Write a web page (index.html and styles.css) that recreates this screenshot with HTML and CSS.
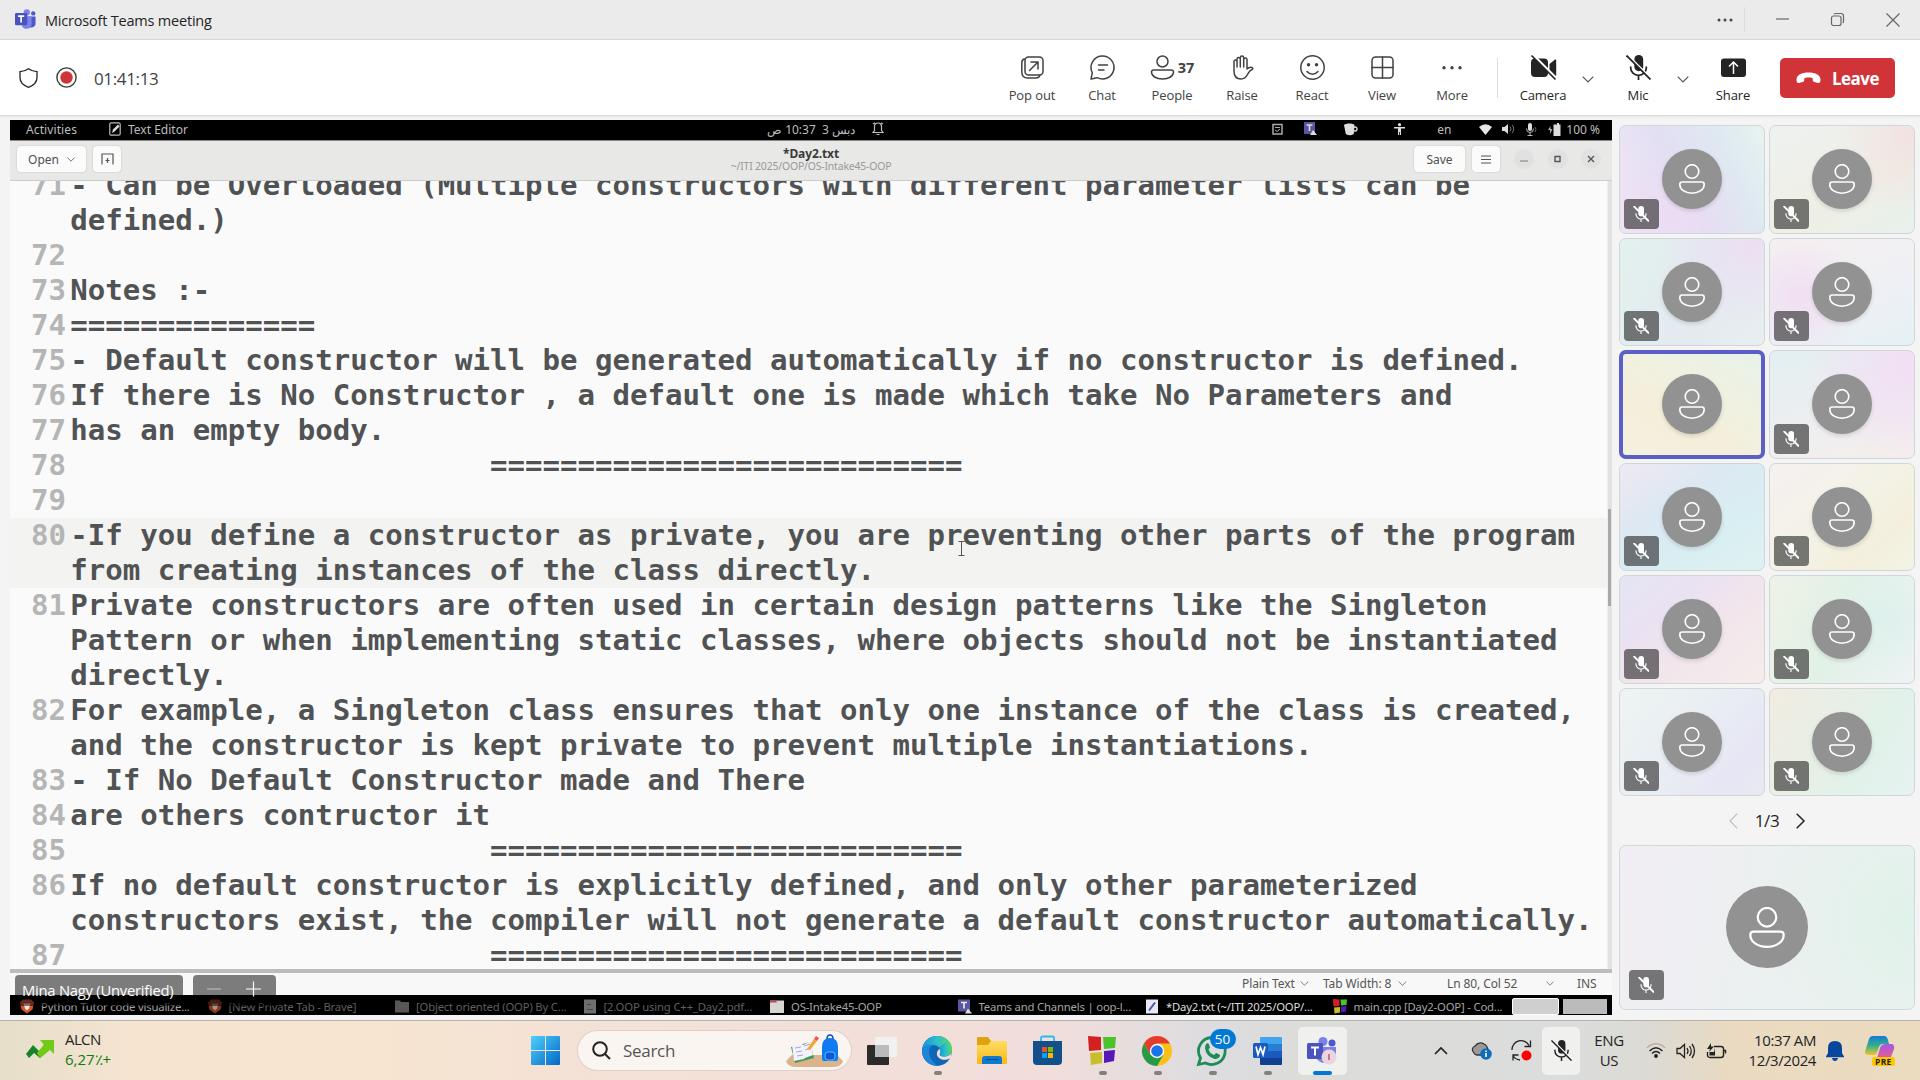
FILE: index.html
```html
<!DOCTYPE html>
<html lang="en">
<head>
<meta charset="utf-8">
<title>Microsoft Teams meeting</title>
<link rel="stylesheet" href="styles.css">
</head>
<body>
<svg class="defs" aria-hidden="true">
  <symbol id="person" viewBox="0 0 26 30"><g fill="none" stroke="currentColor" stroke-width="1.6"><circle cx="13" cy="7.5" r="6.8"/><path d="M3.2 18h19.6c1.4 0 2.4 1 2.4 2.4 0 5-5.2 8.8-12.2 8.8S.8 25.4.8 20.400C.8 19 1.800 18 3.200 18z"/></g></symbol>
  <symbol id="micoff" viewBox="0 0 24 24"><rect x="8" y="0" width="8.500" height="15.500" rx="4.200" fill="currentColor"/><path d="M4.500 11v1.500a7.500 7 0 0 0 15 0V11M12 19.500V24" fill="none" stroke="currentColor" stroke-width="1.700"/><path class="cut" d="M1.500 0L24.500 23" stroke-width="2"/><path d="M.5.500L23.500 23.500" stroke="currentColor" stroke-width="1.700"/></symbol>
  <symbol id="chev" viewBox="0 0 12 7"><path d="M.7.700L6 6 11.300.700" fill="none" stroke="currentColor" stroke-width="1.200"/></symbol>
  <symbol id="brave" viewBox="0 0 14 14"><path d="M3 0h8l3 3-1.500 7L7 14 1.500 10 0 3z" fill="#d9532c"/><path d="M3.500 4h7L9 9l-2 2-2-2z" fill="#f5e6dd"/></symbol>
  <symbol id="teams" viewBox="0 0 24 24"><circle cx="13.500" cy="3.800" r="3.600" fill="#7b83eb"/><circle cx="20.800" cy="5" r="2.500" fill="#5059c9"/><path d="M14 8.500h9.500v7.500a4.500 4.500 0 0 1-9.500 1z" fill="#5059c9"/><path d="M8 8.500h11v9a5.700 5.700 0 0 1-11 1.500z" fill="#7b83eb"/><rect y="4.500" width="14" height="14" rx="1.500" fill="#4b53bc"/><path d="M3.500 8.200h7M7 8.200v7.300" stroke="#fff" stroke-width="1.900"/></symbol>
  <symbol id="blocks" viewBox="0 0 28 30"><path d="M0 0l13 1v13L1 15z" fill="#d42020"/><path d="M15 1h13l-1 11-11 1z" fill="#4cc22c"/><path d="M2 17l12-1v11L3 29z" fill="#c6bf2b"/><path d="M16 15l11-1-1 11-10 2z" fill="#5418b8"/></symbol>
</svg>

<header class="titlebar">
  <svg class="app-logo" width="21" height="21"><use href="#teams"/></svg>
  <span class="app-title">Microsoft Teams meeting</span>
  <div class="window-controls">
    <svg class="dots" width="16" height="4" viewBox="0 0 16 4" fill="#444"><circle cx="2" cy="2" r="1.500"/><circle cx="8" cy="2" r="1.500"/><circle cx="14" cy="2" r="1.500"/></svg>
    <span class="sep"></span>
    <span class="wc"><svg width="13" height="13" viewBox="0 0 13 13"><path d="M0 6h13"/></svg></span>
    <span class="wc"><svg width="13" height="13" viewBox="0 0 13 13"><rect x=".5" y="3" width="9.500" height="9.500" rx="2"/><path d="M3 1.200C3.500.7 4 .5 5 .5h5a2.500 2.500 0 0 1 2.500 2.500v5c0 1-.2 1.500-.7 2"/></svg></span>
    <span class="wc"><svg width="14" height="14" viewBox="0 0 14 14"><path d="M.5.500l13 13M13.500.500l-13 13"/></svg></span>
  </div>
</header>

<nav class="toolbar">
  <div class="call-info">
    <svg width="19" height="20" viewBox="0 0 19 20" fill="none" stroke="#242424" stroke-width="1.300"><path d="M9.500.8c2.500 1.900 5 2.700 8.500 2.800V9.500c0 5-3.500 8-8.500 9.800C4.500 17.500 1 14.500 1 9.500V3.600C4.500 3.500 7 2.700 9.500.8z"/></svg>
    <svg width="21" height="21" viewBox="0 0 21 21"><circle cx="10.500" cy="10.500" r="9.600" fill="#fff" stroke="#3a3a3a" stroke-width="1.400"/><circle cx="10.500" cy="10.500" r="6.200" fill="#d13438"/></svg>
    <span class="timer">01:41:13</span>
  </div>
  <div class="tool"><svg class="line" viewBox="0 0 25 25"><rect x="5" y="2" width="18" height="18" rx="3.500"/><path d="M4.500 4C2.800 4.500 1.800 5.500 1.800 7.500v9.500c0 4 2 6 6 6h8c2 0 3.500-.8 4-2.500M9.500 15.500l8.500-8.500M11 7h7v7"/></svg><span>Pop out</span></div>
  <div class="tool"><svg class="line" viewBox="0 0 25 25"><path d="M12.500 1a11.500 11.500 0 1 1-5.300 21.700L1 24l1.300-6.200A11.500 11.500 0 0 1 12.500 1zM8.500 10h9M8.500 15h5.500"/></svg><span>Chat</span></div>
  <div class="tool"><div class="people"><svg class="line" viewBox="0 0 25 25"><circle cx="12.500" cy="6.500" r="5.500"/><path d="M4 15h17c1.500 0 2.500 1 2.500 2 0 4-4.500 7-11 7s-11-3-11-7c0-1 1-2 2.500-2z"/></svg><b>37</b></div><span>People</span></div>
  <div class="tool"><svg class="line" viewBox="0 0 25 25"><path d="M4 13V6.500c0-2 3-2 3 0V12M7 12V4c0-2 3.300-2 3.300 0v8M10.300 11V2.500c0-2 3.400-2 3.400 0V11M13.700 12V4.500c0-2 3.300-2 3.300 0V14c1.500-1.500 3-2.200 5-1.500 1 .4 1 1.500 0 2-2.500 1-3 2.500-4.500 5-1.500 3-3.500 4.500-6.500 4.500-5 0-7-3.500-7-8V12"/></svg><span>Raise</span></div>
  <div class="tool"><svg class="line" viewBox="0 0 25 25"><circle cx="12.500" cy="12.500" r="11.700"/><path d="M7 16.500c3 3.500 8 3.500 11 0"/><circle cx="8.500" cy="9.800" r="1" fill="#424242"/><circle cx="16.500" cy="9.800" r="1" fill="#424242"/></svg><span>React</span></div>
  <div class="tool"><svg class="line" viewBox="0 0 25 25"><rect x="2" y="2" width="21" height="21" rx="3.500"/><path d="M12.500 2v21M2 12.500h21"/></svg><span>View</span></div>
  <div class="tool"><svg viewBox="0 0 25 25" fill="#424242"><circle cx="4" cy="12.700" r="1.700"/><circle cx="12" cy="12.700" r="1.700"/><circle cx="20" cy="12.700" r="1.700"/></svg><span>More</span></div>
  <span class="tool-sep"></span>
  <div class="tool dark"><svg viewBox="0 0 25 25"><rect y="3.500" width="17" height="18.500" rx="4" fill="#242424"/><path d="M18.500 9L24 4.500q1.200-.5 1.200 1v14.500q0 1.500-1.200 1L18.500 17z" fill="#242424"/><path d="M1.500-.5L26 24" stroke="#fff" stroke-width="2.500"/><path d="M.5.500L24.500 24.500" stroke="#242424" stroke-width="1.700"/></svg><span>Camera</span></div>
  <svg class="chev"><use href="#chev"/></svg>
  <div class="tool dark mic"><svg viewBox="0 0 25 25"><use href="#micoff"/></svg><span>Mic</span></div>
  <svg class="chev"><use href="#chev"/></svg>
  <div class="tool dark share"><svg viewBox="0 0 25 25"><rect y="3.500" width="25" height="18.500" rx="3" fill="#242424"/><path d="M12.500 19V7.500M8 11.500l4.500-4.500 4.500 4.500" fill="none" stroke="#fff" stroke-width="1.500"/></svg><span>Share</span></div>
  <button class="leave"><svg width="25" height="12" viewBox="0 0 25 12"><path d="M12.500.5C19 .5 24.500 3 24.500 7.500c0 3-1 3.700-2.500 3.400l-3.500-.8c-1.300-.4-1.800-1-1.800-2.600V6.200c-2-.8-6.400-.8-8.400 0v1.300c0 1.600-.5 2.200-1.800 2.600L3 10.900C1.500 11.200.5 10.500.5 7.500.5 3 6 .5 12.500.5z" fill="#fff"/></svg><span>Leave</span></button>
</nav>

<main class="stage">
  <section class="shared">
    <div class="gnome-top">
      <span class="activities">Activities</span>
      <svg width="12" height="14" viewBox="0 0 12 14"><rect x=".8" y=".8" width="10.400" height="12.400" rx="1.500" fill="none" stroke="#bbb" stroke-width="1.200"/><path d="M3 11l1-3.500L9 2.500l1.500 2-5 5z" fill="#ddd"/></svg>
      <span class="appname">Text Editor</span>
      <span class="clock" dir="rtl" lang="ar">دبس 3&nbsp; 10:37 ص</span>
      <svg class="bell" width="12" height="14" viewBox="0 0 12 14" fill="none" stroke="#bbb" stroke-width="1.200"><path d="M1 10.500h10L9.500 8.500V4.500a3.500 3.500 0 0 0-7 0v4zM4.500 12.500h3M1 2L3 .7M11 2L9 .7"/></svg>
      <div class="indicators">
        <svg width="11" height="12" viewBox="0 0 11 12"><rect x="1" y="1.500" width="9" height="9.500" fill="none" stroke="#aaa" stroke-width="1.500"/><path d="M3 4.500h5M3 7l2 1.500L8 6" stroke="#aaa" fill="none"/></svg>
        <svg width="15" height="14" viewBox="0 0 15 14"><rect x="1" width="11" height="12" fill="#5a559f"/><path d="M3.500 3h6M6.500 3v6" stroke="#ddd" stroke-width="1.600"/><path d="M7 13l3-5 4 5z" fill="#ddd"/></svg>
        <svg width="14" height="13" viewBox="0 0 14 13"><path d="M0 2c2-2 9-2 10.500 0L9.800 11q-4 2.500-8 0z" fill="#ddd"/><circle cx="11" cy="6" r="2" fill="none" stroke="#ddd" stroke-width="1.300"/></svg>
        <svg width="11" height="12" viewBox="0 0 11 12"><circle cx="5.500" cy="1.700" r="1.600" fill="#ddd"/><path d="M0 4h11v1.500H7V12H5.900V9h-.8v3H4V5.500H0z" fill="#ddd"/></svg>
        <span class="en">en</span>
        <svg width="13" height="11" viewBox="0 0 13 11"><path d="M0 3Q6.500-2.500 13 3L6.500 11z" fill="#e6e6e6"/></svg>
        <svg width="13" height="12" viewBox="0 0 13 12"><path d="M0 4h2.500L6 1v10L2.500 8H0z" fill="#ddd"/><path d="M8 3.500q2 2.500 0 5M10 2q3.500 4 0 8" stroke="#777" fill="none"/></svg>
        <svg width="13" height="13" viewBox="0 0 13 13"><rect x="3" width="4" height="8" rx="2" fill="#ddd"/><path d="M1.500 5.500q0 4 3.500 4t3.500-4M5 9.500V13M2.500 12.500h5" stroke="#bbb" fill="none"/><path d="M10 4q2 2.500 0 5" stroke="#666" fill="none"/></svg>
        <svg width="13" height="13" viewBox="0 0 13 13"><path d="M7.500 1.500H9V0h2v1.500h1.500V13H5.500V1.500z" fill="#ddd"/><path d="M2.500 3L0 7h2v4l2.500-5h-2z" fill="#aaa"/></svg>
        <span class="pct">100 %</span>
      </div>
    </div>

    <div class="gedit-head">
      <span class="gbtn open">Open <svg width="8" height="5"><use href="#chev"/></svg></span>
      <span class="gbtn newtab"><svg width="13" height="12" viewBox="0 0 13 12" fill="none" stroke="#555" stroke-width="1.200"><path d="M1 11.500V1h11v10.500M6.500 5v5M4.500 7.500h4"/></svg></span>
      <div class="doc-title"><b>*Day2.txt</b><span>~/ITI 2025/OOP/OS-Intake45-OOP</span></div>
      <span class="gbtn save">Save</span>
      <span class="gbtn menu"><svg width="10" height="9" viewBox="0 0 10 9"><path d="M0 1h10M0 4.500h10M0 8h10" stroke="#555" stroke-width="1.200"/></svg></span>
      <span class="circ faint"><svg width="8" height="8"><path d="M0 6h8"/></svg></span>
      <span class="circ"><svg width="8" height="8"><path d="M1 1.500h5v5H1z"/></svg></span>
      <span class="circ"><svg width="8" height="8"><path d="M1 1l6 6M7 1L1 7"/></svg></span>
    </div>

    <div class="editor">
      <div class="lines">
<div class="ln"><i>71</i><pre>- Can be Overloaded (Multiple constructors with different parameter lists can be
defined.)</pre></div>
<div class="ln"><i>72</i><pre></pre></div>
<div class="ln"><i>73</i><pre>Notes :-</pre></div>
<div class="ln"><i>74</i><pre>==============</pre></div>
<div class="ln"><i>75</i><pre>- Default constructor will be generated automatically if no constructor is defined.</pre></div>
<div class="ln"><i>76</i><pre>If there is No Constructor , a default one is made which take No Parameters and</pre></div>
<div class="ln"><i>77</i><pre>has an empty body.</pre></div>
<div class="ln"><i>78</i><pre>                        ===========================</pre></div>
<div class="ln"><i>79</i><pre></pre></div>
<div class="ln current"><i>80</i><pre>-If you define a constructor as private, you are preventing other parts of the program
from creating instances of the class directly.</pre></div>
<div class="ln"><i>81</i><pre>Private constructors are often used in certain design patterns like the Singleton
Pattern or when implementing static classes, where objects should not be instantiated
directly.</pre></div>
<div class="ln"><i>82</i><pre>For example, a Singleton class ensures that only one instance of the class is created,
and the constructor is kept private to prevent multiple instantiations.</pre></div>
<div class="ln"><i>83</i><pre>- If No Default Constructor made and There</pre></div>
<div class="ln"><i>84</i><pre>are others contructor it</pre></div>
<div class="ln"><i>85</i><pre>                        ===========================</pre></div>
<div class="ln"><i>86</i><pre>If no default constructor is explicitly defined, and only other parameterized
constructors exist, the compiler will not generate a default constructor automatically.</pre></div>
<div class="ln"><i>87</i><pre>                        ===========================</pre></div>
      </div>
      <div class="scrollbar"><span></span></div>
      <svg class="ibeam" width="7" height="15" viewBox="0 0 7 15"><path d="M.5.500h6M3.500.500v14M.5 14.500h6" stroke="#555" fill="none"/></svg>
    </div>

    <div class="statusbar">
      <span class="plain">Plain Text</span><svg width="9" height="5"><use href="#chev"/></svg>
      <span class="tabw">Tab Width: 8</span><svg width="9" height="5"><use href="#chev"/></svg>
      <span class="lncol">Ln 80, Col 52</span><svg class="far" width="8" height="5"><use href="#chev"/></svg>
      <span class="ins">INS</span>
    </div>

    <div class="gnome-tasks">
      <div class="gt on"><svg><use href="#brave"/></svg><span>Python Tutor code visualize...</span></div>
      <div class="gt dim"><svg><use href="#brave"/></svg><span>[New Private Tab - Brave]</span></div>
      <div class="gt dim"><svg viewBox="0 0 14 14"><path d="M0 1h5l1 1.500h8V13H0z" fill="#8a8586"/></svg><span>[Object oriented (OOP) By C...</span></div>
      <div class="gt dim"><svg viewBox="0 0 14 14"><path d="M1 0h12v14H1z" fill="#aaa"/><path d="M4 5h4M4 10h6" stroke="#666"/></svg><span>[2.OOP using C++_Day2.pdf...</span></div>
      <div class="gt on"><svg viewBox="0 0 14 14"><path d="M0 1h14v12.500H0z" fill="#d8d6d4"/><path d="M0 1h6l1 2H0z" fill="#c7405c"/></svg><span>OS-Intake45-OOP</span></div>
      <div class="gt on"><svg viewBox="0 0 14 14"><rect width="12" height="12" fill="#5a559f"/><path d="M3 3h6M6 3v6" stroke="#eee" stroke-width="1.600"/><path d="M7 14l3-5 4 5z" fill="#ddd"/></svg><span>Teams and Channels | oop-l...</span></div>
      <div class="gt hot"><svg viewBox="0 0 14 14"><path d="M1 0h12v14H1z" fill="#e8e8f4"/><path d="M4 11L10 3" stroke="#4656a8" stroke-width="2"/></svg><span>*Day2.txt (~/ITI 2025/OOP/...</span></div>
      <div class="gt on"><svg><use href="#blocks"/></svg><span>main.cpp [Day2-OOP] - Cod...</span></div>
      <span class="ws first"></span><span class="ws"></span>
    </div>

    <div class="presenter"><span class="name">Mina Nagy (Unverified)</span><span class="zoomctl"><svg width="64" height="20" viewBox="0 0 64 20"><path d="M4 10h14" stroke="#aaa" stroke-width="1.500"/><path d="M43 10h15M50.500 2.500v15" stroke="#fff" stroke-width="1.200"/></svg></span></div>
  </section>

  <aside class="roster">
    <div class="grid">
      <div class="tile t1"><span class="avatar"><svg><use href="#person"/></svg></span><span class="muted"><svg><use href="#micoff"/></svg></span></div>
      <div class="tile t2"><span class="avatar"><svg><use href="#person"/></svg></span><span class="muted"><svg><use href="#micoff"/></svg></span></div>
      <div class="tile t3"><span class="avatar"><svg><use href="#person"/></svg></span><span class="muted"><svg><use href="#micoff"/></svg></span></div>
      <div class="tile t4"><span class="avatar"><svg><use href="#person"/></svg></span><span class="muted"><svg><use href="#micoff"/></svg></span></div>
      <div class="tile t5 speaking"><span class="avatar"><svg><use href="#person"/></svg></span></div>
      <div class="tile t6"><span class="avatar"><svg><use href="#person"/></svg></span><span class="muted"><svg><use href="#micoff"/></svg></span></div>
      <div class="tile t7"><span class="avatar"><svg><use href="#person"/></svg></span><span class="muted"><svg><use href="#micoff"/></svg></span></div>
      <div class="tile t8"><span class="avatar"><svg><use href="#person"/></svg></span><span class="muted"><svg><use href="#micoff"/></svg></span></div>
      <div class="tile t9"><span class="avatar"><svg><use href="#person"/></svg></span><span class="muted"><svg><use href="#micoff"/></svg></span></div>
      <div class="tile t10"><span class="avatar"><svg><use href="#person"/></svg></span><span class="muted"><svg><use href="#micoff"/></svg></span></div>
      <div class="tile t11"><span class="avatar"><svg><use href="#person"/></svg></span><span class="muted"><svg><use href="#micoff"/></svg></span></div>
      <div class="tile t12"><span class="avatar"><svg><use href="#person"/></svg></span><span class="muted"><svg><use href="#micoff"/></svg></span></div>
    </div>
    <div class="pager">
      <svg width="9" height="16" viewBox="0 0 9 16"><path d="M8.300.700L1 8l7.300 7.300" fill="none" stroke="#bdbdbd" stroke-width="1.200"/></svg>
      <span>1/3</span>
      <svg width="9" height="16" viewBox="0 0 9 16"><path d="M.7.700L8 8 .7 15.300" fill="none" stroke="#242424" stroke-width="1.500"/></svg>
    </div>
    <div class="tile self"><span class="avatar"><svg><use href="#person"/></svg></span><span class="muted"><svg><use href="#micoff"/></svg></span></div>
  </aside>
</main>

<footer class="taskbar">
  <div class="widget">
    <svg width="28" height="18" viewBox="0 0 28 18"><path d="M0 14L7 5l6 6 5-6 5 5-9 8-6-5-5 5z" fill="#16832b"/><path d="M14 0h14v14l-4-4-10 8-3-5 7-8z" fill="#72c916"/></svg>
    <div><span>ALCN</span><span class="up">6,27٪+</span></div>
  </div>
  <div class="tb"><svg width="29" height="29" viewBox="0 0 29 29"><defs><linearGradient id="win" x2="1" y2="1"><stop stop-color="#50d0fa"/><stop offset="1" stop-color="#0068c8"/></linearGradient></defs><path d="M1 0h13v14H0V1q0-1 1-1zM15 0h13q1 0 1 1v13H15zM0 15h14v14H1q-1 0-1-1zM15 15h14v13q0 1-1 1H15z" fill="url(#win)"/></svg></div>
  <div class="search">
    <svg width="19" height="19" viewBox="0 0 19 19" fill="none" stroke="#222" stroke-width="2"><circle cx="8" cy="8" r="6.800"/><path d="M13 13l5 5"/></svg>
    <span>Search</span>
    <svg class="art" width="58" height="32" viewBox="0 0 58 32"><path d="M0 26l6-6h45l6 6q-2 6-10 6H10Q2 32 0 26z" fill="#dbb48b"/><path d="M5 12l19-5 4 16-19 5z" fill="#3f9a58"/><path d="M6 10l9-2 2 2 8-4 2 14-8 3-1 1-10 2z" fill="#f4f2fb"/><path d="M9 13l6-1M10 17l6-1M11 21l6-1M18 11l6-2M19 15l6-2" stroke="#a9a6d0"/><path d="M21 14l7-10 3 2-7 9z" fill="#f5a63a"/><path d="M28 4l2-3 3 2-2 3z" fill="#ef5350"/><path d="M36 12q0-9 8-9t8 9v12q0 2-2 2H38q-2 0-2-2z" fill="#0f7af2"/><path d="M41 4q0-4 3-4t3 4" fill="none" stroke="#0a4fbe" stroke-width="1.500"/><rect x="39" y="17" width="10" height="8" rx="3" fill="#1556d8" stroke="#48c3ff"/></svg>
  </div>
  <div class="apps">
    <div class="tb"><svg width="30" height="28" viewBox="0 0 30 28"><rect y="8" width="22" height="20" rx="1" fill="#2b2b29"/><rect x="8" width="22" height="20" rx="1" fill="#f2f2f2" opacity=".93"/><path d="M8 8h14v12H8z" fill="#bbb"/></svg></div>
    <div class="tb run"><svg width="30" height="30" viewBox="0 0 30 30"><defs><linearGradient id="edge" x1="0" x2="1"><stop stop-color="#1b8fdc"/><stop offset=".5" stop-color="#2bc0cf"/><stop offset="1" stop-color="#5fd84c"/></linearGradient></defs><circle cx="15" cy="15" r="15" fill="#0f66b8"/><path d="M0 14C1 5 7 0 15 0c9 0 15 6 15 13 0 5-4 7.500-8 7.500-3 0-5-1-4-3C20 14 17 9 11 9 6 9 2 11 0 14z" fill="url(#edge)"/><path d="M0 15c1-4 6-7 11-6-4 2-5 7-3 12 2 4 5 7 8 9C7 30 0 23 0 15z" fill="#1c87d8"/><path d="M30 14.500C29.500 19 26 20.500 22 20.500c-3 0-5-1-4-3 .8-1.500.5-3-.5-4.500-3 2-3.500 6-1 8.500 3 3 8.500 3 12.500.500z" fill="#f0dedc"/><path d="M30 13c0 5-4 7.500-8 7.500-3 0-5-1-4-3 1-2 .5-4-1-6L24 6z" fill="url(#edge)"/></svg></div>
    <div class="tb"><svg width="30" height="27" viewBox="0 0 30 27"><defs><linearGradient id="fold" y2="1" x2="0"><stop stop-color="#ffdc64"/><stop offset="1" stop-color="#fbb812"/></linearGradient></defs><path d="M0 1q0-1 1-1h10l3 4h15v8H0z" fill="#e0a30e"/><path d="M0 8h11l3-4h15q1 0 1 1v21q0 1-1 1H1q-1 0-1-1z" fill="url(#fold)"/><path d="M5 27v-5q0-3 3-3h14q3 0 3 3v5z" fill="#0f79cd"/><path d="M8.500 22.500h13" stroke="#0a4d8c"/></svg></div>
    <div class="tb"><svg width="29" height="29" viewBox="0 0 29 29"><path d="M8 5V2q0-1.500 1.500-1.500h10Q21 .5 21 2v3" fill="none" stroke="#28b9f2" stroke-width="1.800"/><path d="M0 5h29v20q0 4-4 4H4q-4 0-4-4z" fill="#134f8b"/><path d="M9 11h5v5H9z" fill="#f25022"/><path d="M15 11h5v5h-5z" fill="#7fba00"/><path d="M9 17h5v5H9z" fill="#00a4ef"/><path d="M15 17h5v5h-5z" fill="#ffb900"/></svg></div>
    <div class="tb run"><svg width="28" height="30"><use href="#blocks"/></svg></div>
    <div class="tb run"><svg width="30" height="30" viewBox="0 0 30 30"><circle cx="15" cy="15" r="15" fill="#fbc116"/><path d="M2 7.500A15 15 0 0 1 28 7.500H15L8.500 18.750z" fill="#e33b2e"/><path d="M2 7.500A15 15 0 0 0 15 30l6.500-11.250H8.500z" fill="#269a48"/><circle cx="15" cy="15" r="7.200" fill="#fff"/><circle cx="15" cy="15" r="5.800" fill="#1a73e8"/></svg></div>
    <div class="tb run"><svg width="30" height="30" viewBox="0 0 30 30"><path d="M15 1.500A13.500 13.500 0 1 1 8.500 27L1.500 28.500 3.500 22A13.500 13.500 0 0 1 15 1.500z" fill="none" stroke="#1d8c55" stroke-width="2.800"/><path d="M9.500 7.500q2-1 2.500 1l1 3-1.500 2q1.500 4 5.500 5.500l2-2 3.500 1.500q1 1 0 2.500-2 2.500-5 2Q9 20.500 8 12q0-3 1.500-4.500z" fill="#1d8c55"/></svg><b class="count">50</b></div>
    <div class="tb run"><svg width="29" height="28" viewBox="0 0 29 28"><path d="M7 1q0-1 1-1h20q1 0 1 1v6H7z" fill="#41a5ee"/><path d="M7 7h22v7H7z" fill="#2b7cd3"/><path d="M7 14h22v7H7z" fill="#185abd"/><path d="M7 21h22v6q0 1-1 1H8q-1 0-1-1z" fill="#103f91"/><rect y="6" width="15" height="15" rx="1.500" fill="#185abd"/><path d="M3 9.500l2 8 2.500-7 2.500 7 2-8" stroke="#fff" stroke-width="1.700" fill="none"/></svg></div>
    <div class="tb active"><svg width="30" height="28" viewBox="0 0 30 28"><circle cx="16" cy="4.500" r="4.500" fill="#7b83eb"/><circle cx="25" cy="6" r="3.500" fill="#5059c9"/><path d="M9 10h20v8q-2 8-10 8T9 20z" fill="#7b83eb"/><rect y="6" width="16" height="16" rx="1.500" fill="#4b53bc"/><path d="M4 10.500h8M8 10.500v8" stroke="#fff" stroke-width="2"/><circle cx="22" cy="20" r="7.500" fill="#ecd4de"/><path d="M22 17v6" stroke="#b0567f" stroke-width="1.500"/></svg></div>
  </div>
  <div class="tray">
    <div class="ti"><svg width="14" height="8" viewBox="0 0 14 8"><path d="M1 7l6-6 6 6" fill="none" stroke="#222" stroke-width="1.700"/></svg></div>
    <div class="ti"><svg width="21" height="18" viewBox="0 0 21 18"><path d="M3 11a4 4 0 0 1 1-7Q8-1 13 2q3 1 4 6l-3 5H6q-2 0-3-2z" fill="#9a9a9a" stroke="#333" stroke-width="1.300"/><circle cx="15" cy="12" r="5.800" fill="#0f6cbd"/><path d="M15 11v4M15 8.500v1.500" stroke="#fff" stroke-width="1.600"/></svg></div>
    <div class="ti"><svg width="21" height="21" viewBox="0 0 21 21" fill="none" stroke="#222" stroke-width="1.300"><path d="M1 10A9 9 0 0 1 18 5.500M19.500.500v6h-6M7.500 15H2v5.500M2 15.500q2 4 7 4.500"/><circle cx="15.500" cy="15.500" r="5" fill="#f00" stroke="none"/></svg></div>
    <div class="ti micbox"><svg width="21" height="21"><use href="#micoff"/></svg></div>
    <div class="lang"><span>ENG</span><span>US</span></div>
    <div class="ti net"><svg width="20" height="15" viewBox="0 0 20 15" fill="none" stroke="#222" stroke-width="1.400"><path d="M.7 5Q10-3.500 19.300 5" stroke="#bbb09c"/><path d="M3.500 8Q10 1.500 16.500 8M6 10.500q4-4 8 0"/><circle cx="10" cy="13" r="1.200" fill="#222"/></svg></div>
    <div class="ti net"><svg width="20" height="16" viewBox="0 0 20 16" fill="none" stroke="#222" stroke-width="1.300"><path d="M1 5.500h3L8.500 1.500v13L4 10.500H1zM11 5q2 3 0 6M13.500 3q3.500 5 0 10M16 1q5 7 0 14"/></svg></div>
    <div class="ti net"><svg width="20" height="16" viewBox="0 0 20 16" fill="none" stroke="#222" stroke-width="1.400"><path d="M8 3.500h7q2.500 0 2.500 2.500v6q0 2.500-2.500 2.500H4Q1.500 14.500 1.500 12V9M18 7.500h1.500v3"/><path d="M3.500 9H8l1-4v7.500H3.500zM5 0L1 6h3L3 9l5-5.500H5z" fill="#222" stroke="none"/></svg></div>
    <div class="clock2"><span>10:37 AM</span><span>12/3/2024</span></div>
    <div class="ti bell2"><svg width="18" height="20" viewBox="0 0 18 20"><path d="M9 0q7 0 7 7v5l2 3.500v.8H0v-.8L2 12V7q0-7 7-7zM6 17h6q-.5 3-3 3t-3-3z" fill="#06469c"/></svg></div>
    <div class="ti copilot"><svg width="30" height="29" viewBox="0 0 30 29"><defs><linearGradient id="cp1" x2="0" y2="1"><stop stop-color="#1a78d8"/><stop offset=".5" stop-color="#30b08c"/><stop offset="1" stop-color="#f4c32c"/></linearGradient><linearGradient id="cp2" x2="0" y2="1"><stop stop-color="#a558e8"/><stop offset="1" stop-color="#f0607a"/></linearGradient></defs><path d="M8 0h11q3 0 4 4l1 4h-6q-3 0-4 3l-2 6q-1 2-3 2H3q-4 0-2.500-5L4 3q1-3 4-3z" fill="url(#cp1)"/><path d="M21 8h5q4 0 3 5l-3 8q-1 4-5 4H8q3 0 4-3l3-10q1-4 6-4z" fill="url(#cp2)"/></svg><b>PRE</b></div>
  </div>
</footer>
</body>
</html>
```
FILE: styles.css
```css
* { box-sizing: border-box; }
body { margin: 0; width: 1920px; height: 1080px; overflow: hidden; display: flex; flex-direction: column; background: #f4f4f4; color: #242424; font-family: "Open Sans", "Noto Sans", sans-serif; }
.defs { position: absolute; width: 0; height: 0; }
svg { display: block; flex: none; overflow: visible; }
.cut { stroke: #fff; }

.titlebar { height: 40px; flex: none; display: flex; align-items: center; padding-left: 15px; background: #ebebeb; border-bottom: 1px solid #d6d6d6; }
.app-title { margin-left: 9px; padding-top: 2px; font-size: 14.5px; letter-spacing: -.2px; }
.window-controls { display: flex; align-items: center; margin-left: auto; }
.window-controls .sep { width: 1px; height: 25px; margin-left: 11px; margin-right: 10px; background: #dcdcdc; }
.wc { width: 55px; display: flex; justify-content: center; }
.wc svg { fill: none; stroke: #666; stroke-width: 1.2; }

.toolbar { height: 76px; flex: none; display: flex; align-items: center; padding-right: 25px; background: #fff; border-bottom: 1px solid #dcdcdc; box-shadow: 0 1px 2px #0001; }
.call-info { display: flex; align-items: center; width: 997px; padding-left: 19px; gap: 18px; }
.timer { margin-left: -1px; padding-top: 2px; font-size: 17px; letter-spacing: -.35px; color: #424242; }
.tool { width: 70px; height: 48px; display: flex; flex-direction: column; align-items: center; gap: 6px; margin-top: 2px; font-size: 13px; line-height: 19px; color: #424242; letter-spacing: -.1px; white-space: nowrap; }
.tool svg { width: 25px; height: 25px; }
.tool.dark { color: #242424; }
.tool .line { fill: none; stroke: #424242; stroke-width: 1.5; stroke-linejoin: round; stroke-linecap: round; }
.people { display: flex; align-items: center; gap: 3px; height: 25px; font-size: 14.5px; letter-spacing: 0; }
.tool-sep { width: 1px; height: 40px; margin: 0 10px; background: #ddd; }
.chev { width: 12px; height: 7px; margin: 4px 4px 0; color: #555; }
.mic, .share { margin-left: 5px; }
.leave { display: flex; align-items: center; justify-content: center; gap: 11px; width: 115px; height: 40px; margin-left: 12px; padding: 0; border: 0; border-radius: 5px; background: #d13438; color: #fff; font: 700 17px "Open Sans", sans-serif; letter-spacing: -.5px; }
.leave span { padding-top: 1px; }

.stage { height: 904px; flex: none; display: flex; padding: 4px 5px 5px 10px; }
.shared { position: relative; width: 1602px; height: 895px; display: flex; flex-direction: column; background: #fafafa; font-family: "Noto Sans", sans-serif; }
.gnome-top { height: 20px; display: flex; align-items: center; padding: 0 12px 2px 16px; background: #000; color: #bdbdbd; font-size: 12px; }
.activities { width: 83px; letter-spacing: .1px; }
.appname { margin-left: 7px; width: 175px; }
.clock { width: 92px; margin-left: 464px; white-space: nowrap; text-align: left; }
.bell { margin-left: 13px; }
.indicators { display: flex; align-items: center; margin-left: auto; }
.indicators svg:nth-of-type(2) { margin-left: 20px; }
.indicators svg:nth-of-type(3) { margin-left: 26px; }
.indicators svg:nth-of-type(4) { margin-left: 36px; }
.en { margin-left: 32px; margin-right: 28px; }
.indicators svg:nth-of-type(n+6) { margin-left: 10px; }
.pct { margin-left: 5px; }

.gedit-head { height: 41px; display: flex; align-items: center; padding: 0 11px 3px 7px; border-top: 1px solid #888; border-bottom: 1px solid #ccc; background: #e8e8e7; font-size: 12px; color: #505050; }
.gbtn { height: 26px; display: flex; align-items: center; justify-content: center; border-radius: 4px; background: #fbfbfb; box-shadow: 0 0 2px #0003; }
.open { width: 69px; gap: 8px; }
.newtab { width: 28px; margin-left: 7px; }
.doc-title { width: 200px; margin-left: 590px; padding-top: 2px; display: flex; flex-direction: column; align-items: center; line-height: 13px; white-space: nowrap; letter-spacing: -.1px; }
.doc-title b { color: #3a3a3a; font-size: 12px; }
.doc-title span { color: #999; font-size: 10.4px; letter-spacing: -.15px; }
.save { width: 51px; margin-left: auto; }
.menu { width: 28px; margin: 0 14px 0 7px; }
.circ { width: 20px; height: 20px; margin-right: 13.5px; border-radius: 50%; display: flex; align-items: center; justify-content: center; background: #e1e1e1; }
.circ:last-child { margin-right: 0; }
.circ svg { fill: none; stroke: #555; stroke-width: 1.4; }
.circ.faint svg { stroke: #999; }

.editor { position: relative; height: 792px; display: flex; overflow: hidden; background: #fafafb; border-bottom: 4px solid #bcbcbc; }
.lines { width: 1597px; margin-top: -13.5px; flex: none; font: bold 29.07px/35px "DejaVu Sans Mono", monospace; color: #505253; }
.ln { display: flex; min-height: 35px; }
.ln i { width: 56px; flex: none; text-align: right; font-style: normal; color: #b5b5b5; }
.ln pre { margin: 0 0 0 4.2px; font: inherit; }
.current { background: #f3f3f1; }
.scrollbar { width: 5px; background: #e2e2e2; border-left: 1px solid #eee; }
.scrollbar span { display: block; width: 3px; height: 97px; margin-top: 328px; background: #a9a9a9; }
.ibeam { position: absolute; left: 948px; top: 360px; }

.statusbar { height: 22px; display: flex; align-items: center; padding-left: 1232px; padding-bottom: 1px; font-size: 12px; color: #555; background: #f8f8f8; white-space: nowrap; letter-spacing: -.1px; }
.statusbar svg { color: #666; }
.plain { width: 58px; }
.tabw { width: 75px; margin-left: 14px; }
.lncol { width: 72px; margin-left: 40px; }
.statusbar .far { margin-left: 27px; }
.ins { margin-left: 23px; }

.gnome-tasks { height: 20px; display: flex; align-items: center; padding-left: 10px; padding-top: 2px; background: #000; color: #a5a5a5; font-size: 11.3px; letter-spacing: -.18px; overflow: hidden; }
.gt { width: 187.5px; flex: none; display: flex; align-items: center; gap: 7px; white-space: nowrap; }
.gt svg { width: 14px; height: 15px; }
.dim { color: #5f5f5f; }
.dim svg { opacity: .65; }
.hot { color: #ddd; }
.ws { width: 44px; height: 15px; flex: none; background: #bbb; margin-left: 4px; }
.ws.first { width: 47px; height: 17px; margin-left: -8px; border: 1px solid #fff; border-radius: 2px; background: #cfcfcf; }

.presenter { position: absolute; left: 5px; top: 855px; height: 31px; display: flex; gap: 10px; font-family: "Open Sans", sans-serif; }
.presenter span { border-radius: 4px; background: #00000080; }
.presenter .name { width: 168px; padding-left: 7px; color: #fff; font-size: 14.8px; line-height: 31px; letter-spacing: -.25px; white-space: nowrap; }
.presenter .zoomctl { width: 83px; padding: 4px 10px; }

.roster { width: 296px; margin-left: 7px; display: flex; flex-direction: column; }
.grid { display: grid; grid-template-columns: 146px 146px; grid-template-rows: repeat(6, 1fr); gap: 4px; height: 671px; margin-top: 5px; }
.tile { position: relative; display: flex; align-items: center; justify-content: center; border: 1px solid #d0d7d9; border-radius: 7px; }
.avatar { width: 60px; height: 60px; border-radius: 50%; display: flex; align-items: center; justify-content: center; background: #929292; color: #fff; box-shadow: 0 2px 4px #0002; }
.avatar svg { width: 26px; height: 30px; }
.muted { position: absolute; left: 4px; bottom: 4px; width: 35px; height: 30px; padding-right: 1px; border-radius: 4px; background: rgba(28, 28, 28, .58); display: flex; align-items: center; justify-content: center; color: #fff; }
.muted svg { width: 16px; height: 16px; }
.speaking::after { content: ""; position: absolute; inset: -1px; border: 4px solid #5b5fc7; border-radius: 7px; }
.t1 { background: radial-gradient(circle at 35% 85%, #ecdcf3, transparent 55%), linear-gradient(65deg, #f3e6f6, #e2dff3 45%, #dfe9f1 75%, #e8f3f0); }
.t2 { background: radial-gradient(circle at 100% 10%, #f2e2e2, transparent 45%), linear-gradient(150deg, #eff1f1, #eeefe4 60%, #e7f1ed); }
.t3 { background: radial-gradient(circle at 90% 5%, #ecdff2, transparent 50%), linear-gradient(110deg, #e2f1ee, #e3eaf0 50%, #e8eef0); }
.t4 { background: radial-gradient(circle at 20% 55%, #f0dff2, transparent 50%), linear-gradient(160deg, #f6f0f0, #eef0f5 60%, #e4f1f3); }
.t5 { background: linear-gradient(30deg, #f6f0df, #f5eedb 35%, #f0f1e0 60%, #e8f2ea); }
.t6 { background: radial-gradient(circle at 95% 15%, #f2def4, transparent 60%), linear-gradient(165deg, #e3eff1, #eeeef0 60%, #f5efeb); }
.t7 { background: linear-gradient(145deg, #efe9f2, #dde8f2 35%, #d9eef2 65%, #def2f1); }
.t8 { background: linear-gradient(140deg, #f5f1f1, #f3f2e5 50%, #f4efdd 75%, #f2f3e6); }
.t9 { background: linear-gradient(140deg, #e5e5f5, #eae2f2 30%, #f2e6ec 60%, #f5ecea); }
.t10 { background: radial-gradient(circle at 80% 40%, #def1ec, transparent 45%), linear-gradient(110deg, #eef2e7, #e2f1e6 45%, #eef2f5); }
.t11 { background: linear-gradient(130deg, #eef3f2, #e9eef3 45%, #e6e6f4 80%, #eaeaf4); }
.t12 { background: linear-gradient(120deg, #f2ece2, #e5f0e6 50%, #e1f2e9 65%, #e6f2f2); }
.pager { height: 49px; display: flex; align-items: center; justify-content: center; gap: 17px; font-size: 17px; letter-spacing: -.4px; }
.self { height: 165px; padding-bottom: 1px; background: radial-gradient(circle at 100% 45%, #e0f2e9, transparent 50%), linear-gradient(100deg, #f2edf4, #ebf0f0 50%, #edf2f1); }
.self .avatar { width: 82px; height: 82px; box-shadow: none; }
.self .avatar svg { width: 36px; height: 41px; }
.self .muted { left: 9px; bottom: 9px; }

.taskbar { height: 60px; flex: none; display: flex; align-items: center; border-top: 1px solid #b5b1ad; background: linear-gradient(90deg, #e6dfc9 0, #f6e4d1 7%, #f7e5d0 18%, #f4e1d7 32%, #f1dedb 55%, #dddce0 63%, #dcdcd9 68%, #dbdddc 82%, #dcdad3 86%, #e9dac1 90%, #ebdcc0 100%); }
.widget { width: 518px; padding-left: 26px; padding-bottom: 3px; display: flex; align-items: center; gap: 11px; font-size: 15px; line-height: 20px; letter-spacing: -.6px; }
.widget div { display: flex; flex-direction: column; }
.widget .up { color: #0f7b0f; }
.tb { position: relative; width: 55px; height: 48px; display: flex; align-items: center; justify-content: center; }
.search { width: 273px; height: 39px; margin: 0 3.5px 0 5px; padding: 0 7px 0 14px; display: flex; align-items: center; border-radius: 20px; background: #fbf5f2; box-shadow: 0 0 0 1px #dfd0c8; }
.search span { margin-left: 12px; font-size: 17px; letter-spacing: -.3px; color: #555; }
.art { margin-left: auto; }
.apps { display: flex; }
.run::after, .active::after { content: ""; position: absolute; left: 24px; bottom: 0; width: 8px; height: 4px; border-radius: 2px; background: #858079; }
.active::before { content: ""; position: absolute; inset: 0 3px; border-radius: 5px; background: #f0f0ef; z-index: -1; }
.active { z-index: 0; }
.active::after { left: 18px; width: 19px; background: #0078d4; }
.count { position: absolute; left: 25px; top: 2px; width: 26px; height: 20px; border-radius: 10px; background: #0078d4; color: #fff; font-size: 13.5px; line-height: 20px; font-weight: 500; text-align: center; }
.tray { display: flex; align-items: center; margin-left: 71.5px; font-size: 15px; line-height: 20px; letter-spacing: -.4px; }
.ti { position: relative; width: 40px; height: 48px; flex: none; display: flex; align-items: center; justify-content: center; }
.micbox { width: 38px; margin-left: 1px; border-radius: 5px; background: #f0f0ef; }
.micbox .cut { stroke: #f0f0ef; }
.lang { width: 58px; margin-right: 3px; padding-bottom: 1px; display: flex; flex-direction: column; align-items: center; }
.ti.net { width: 30px; }
.clock2 { width: 85px; padding-bottom: 2px; display: flex; flex-direction: column; align-items: flex-end; white-space: nowrap; }
.ti.bell2 { width: 30px; margin-left: 4px; }
.ti.copilot { width: 60px; }
.copilot b { position: absolute; left: 22px; bottom: 9px; padding: 0 3px; border-radius: 2px; background: #ffc800; color: #222; font-size: 8.5px; line-height: 9px; letter-spacing: .3px; }
```
